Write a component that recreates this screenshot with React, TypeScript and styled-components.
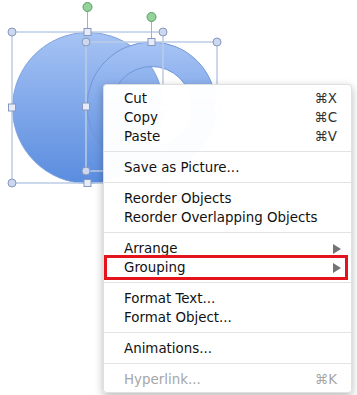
import React from 'react';
import styled, { createGlobalStyle } from 'styled-components';

const GlobalStyle = createGlobalStyle`
  html, body {
    margin: 0;
    padding: 0;
    background: #ffffff;
  }
  body {
    font-family: 'DejaVu Sans', 'Liberation Sans', sans-serif;
  }
`;

const Stage = styled.div`
  position: relative;
  width: 357px;
  height: 395px;
  overflow: hidden;
  background: #ffffff;
`;

const Canvas = styled.svg`
  display: block;
`;

const Menu = styled.ul`
  position: absolute;
  left: 103px;
  top: 84px;
  width: 249px;
  margin: 0;
  padding: 4px 0 3px;
  list-style: none;
  box-sizing: border-box;
  background: rgba(255, 255, 255, 0.98);
  border: 1px solid rgba(0, 0, 0, 0.12);
  border-radius: 4px;
  box-shadow: 0 3px 9px rgba(0, 0, 0, 0.28);
  font-size: 13.4px;
  color: #111111;
`;

const Item = styled.li<{ $disabled?: boolean; $marked?: boolean }>`
  position: relative;
  display: flex;
  align-items: center;
  justify-content: space-between;
  height: 19px;
  padding: 0 10px 0 20px;
  color: ${p => (p.$disabled ? '#a6a6a6' : '#111111')};
  white-space: nowrap;

  ${p =>
    p.$marked &&
    `
    &::after {
      content: '';
      position: absolute;
      left: 0;
      right: 3px;
      top: -3px;
      bottom: -3px;
      border: 3px solid #e3141c;
    }
  `}
`;

const Shortcut = styled.span<{ $disabled?: boolean }>`
  margin-right: 4px;
  color: ${p => (p.$disabled ? '#a6a6a6' : '#303030')};
`;

const Arrow = styled.span`
  width: 0;
  height: 0;
  border-top: 5px solid transparent;
  border-bottom: 5px solid transparent;
  border-left: 8px solid #747474;
`;

const Separator = styled.li`
  height: 1px;
  margin: 5px 0 6px;
  background: #e3e3e3;
`;

type Entry =
  | { sep: true }
  | { label: string; key?: string; sub?: boolean; disabled?: boolean; marked?: boolean };

const entries: Entry[] = [
  { label: 'Cut', key: '⌘X' },
  { label: 'Copy', key: '⌘C' },
  { label: 'Paste', key: '⌘V' },
  { sep: true },
  { label: 'Save as Picture...' },
  { sep: true },
  { label: 'Reorder Objects' },
  { label: 'Reorder Overlapping Objects' },
  { sep: true },
  { label: 'Arrange', sub: true },
  { label: 'Grouping', sub: true, marked: true },
  { sep: true },
  { label: 'Format Text...' },
  { label: 'Format Object...' },
  { sep: true },
  { label: 'Animations...' },
  { sep: true },
  { label: 'Hyperlink...', key: '⌘K', disabled: true }
];

const Handles = ({ x, y, w, h }: { x: number; y: number; w: number; h: number }) => {
  const cx = x + w / 2;
  const cy = y + h / 2;
  const corners = [
    [x, y],
    [x + w, y],
    [x, y + h],
    [x + w, y + h]
  ];
  const sides = [
    [cx, y],
    [x, cy],
    [x + w, cy],
    [cx, y + h]
  ];
  return (
    <g>
      <rect x={x} y={y} width={w} height={h} fill="none" stroke="#bccbe6" strokeWidth="1.5" />
      <line x1={cx} y1={y} x2={cx} y2={y - 24} stroke="#9fb1d2" strokeWidth="1" />
      <circle cx={cx} cy={y - 25} r="4.5" fill="#93d39a" stroke="#5d9a66" strokeWidth="1" />
      {corners.map(([px, py], i) => (
        <circle key={i} cx={px} cy={py} r="4" fill="#cdd8ee" stroke="#8698bf" strokeWidth="1" />
      ))}
      {sides.map(([px, py], i) => (
        <rect
          key={i}
          x={px - 3.5}
          y={py - 3.5}
          width="7"
          height="7"
          fill="#e7edf8"
          stroke="#8698bf"
          strokeWidth="1"
        />
      ))}
    </g>
  );
};

const donut = (cx: number, cy: number, ro: number, ri: number) =>
  `M ${cx - ro} ${cy} a ${ro} ${ro} 0 1 0 ${ro * 2} 0 a ${ro} ${ro} 0 1 0 ${-ro * 2} 0 Z ` +
  `M ${cx - ri} ${cy} a ${ri} ${ri} 0 1 0 ${ri * 2} 0 a ${ri} ${ri} 0 1 0 ${-ri * 2} 0 Z`;

const Shapes = () => (
  <Canvas width="357" height="395" viewBox="0 0 357 395">
    <defs>
      <linearGradient id="fill" x1="0" y1="0" x2="0" y2="1">
        <stop offset="0" stopColor="#a6c3f4" />
        <stop offset="1" stopColor="#5a8cdf" />
      </linearGradient>
    </defs>
    <circle cx="88" cy="108" r="75.5" fill="url(#fill)" stroke="#7fa2dc" strokeWidth="1" />
    <path
      d={donut(151.5, 106.5, 64.5, 40)}
      fillRule="evenodd"
      fill="url(#fill)"
      stroke="#7297d8"
      strokeWidth="1"
    />
    <Handles x={12} y={32} w={151} h={151} />
    <Handles x={86} y={42} w={131} h={129} />
  </Canvas>
);

export default function App() {
  return (
    <Stage>
      <GlobalStyle />
      <Shapes />
      <Menu>
        {entries.map((e, i) =>
          'sep' in e ? (
            <Separator key={i} />
          ) : (
            <Item key={i} $disabled={e.disabled} $marked={e.marked}>
              <span>{e.label}</span>
              {e.key && <Shortcut $disabled={e.disabled}>{e.key}</Shortcut>}
              {e.sub && <Arrow />}
            </Item>
          )
        )}
      </Menu>
    </Stage>
  );
}
